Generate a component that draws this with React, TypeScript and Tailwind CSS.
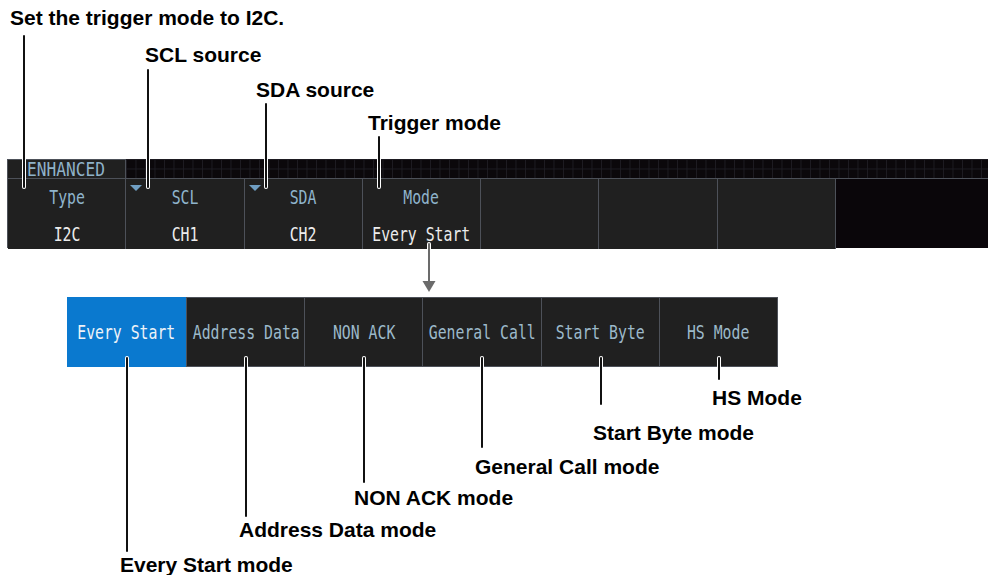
const mono = "font-['DejaVu_Sans_Mono','Liberation_Mono',monospace]";

const cells = [
  { label: "Type", value: "I2C", mark: false },
  { label: "SCL", value: "CH1", mark: true },
  { label: "SDA", value: "CH2", mark: true },
  { label: "Mode", value: "Every Start", mark: false },
  { label: "", value: "", mark: false },
  { label: "", value: "", mark: false },
  { label: "", value: "", mark: false },
];

const modes = ["Every Start", "Address Data", "NON ACK", "General Call", "Start Byte", "HS Mode"];

const notes = [
  { text: "Set the trigger mode to I2C.", x: 10, y: 6, lx: 23, top: 35, bottom: 188 },
  { text: "SCL source", x: 145, y: 43, lx: 147, top: 69, bottom: 188 },
  { text: "SDA source", x: 256, y: 78, lx: 265, top: 103, bottom: 188 },
  { text: "Trigger mode", x: 368, y: 111, lx: 378, top: 136, bottom: 188 },
  { text: "HS Mode", x: 712, y: 386, lx: 718, top: 357, bottom: 380 },
  { text: "Start Byte mode", x: 593, y: 421, lx: 600, top: 357, bottom: 405 },
  { text: "General Call mode", x: 475, y: 455, lx: 481, top: 357, bottom: 448 },
  { text: "NON ACK mode", x: 354, y: 486, lx: 363, top: 357, bottom: 483 },
  { text: "Address Data mode", x: 239, y: 518, lx: 245, top: 357, bottom: 517 },
  { text: "Every Start mode", x: 120, y: 553, lx: 126, top: 357, bottom: 552 },
];

function Squeezed({ children, className }: { children: string; className?: string }) {
  return (
    <span className={`inline-block scale-x-[0.74] whitespace-pre text-[20px] leading-none ${mono} ${className ?? ""}`}>
      {children}
    </span>
  );
}

function Callout({ text, x, y, lx, top, bottom }: (typeof notes)[number]) {
  return (
    <>
      <div
        className="absolute w-[1.5px] rounded-full bg-[#111] shadow-[0_0_0_1px_#fff]"
        style={{ left: lx, top, height: bottom - top }}
      />
      <div
        className="absolute whitespace-nowrap font-['Liberation_Sans',Arial,sans-serif] text-[21px] font-bold leading-6 text-black"
        style={{ left: x, top: y }}
      >
        {text}
      </div>
    </>
  );
}

export default function App() {
  return (
    <div className="relative h-[575px] w-[988px] overflow-hidden bg-white">
      {/* trigger setup panel */}
      <div className="pl-[7px] pt-[159px]">
        <div className="flex h-[19px]">
          <div className="flex w-[119px] shrink-0 items-center border-x border-t border-[#4d5159] bg-[#202020] pl-[19px]">
            <span className={`inline-block origin-left scale-x-[0.81] whitespace-nowrap text-[20px] leading-none text-[#8fb2c9] ${mono}`}>
              ENHANCED
            </span>
          </div>
          <div className="flex-1 bg-[#0b080b] bg-[linear-gradient(to_right,#1d1c22_1px,transparent_1px),linear-gradient(to_bottom,#1d1c22_1px,transparent_1px)] bg-[size:9.5px_9.5px]" />
        </div>
        <div className="flex h-[70px] border-t border-[#4d5159]">
          <div className="grid w-[829px] grid-cols-7 border-b border-l border-[#4d5159]">
            {cells.map((c, i) => (
              <div key={i} className="relative flex min-w-0 flex-col border-r border-[#4d5159] bg-[#202020]">
                {c.mark && (
                  <div className="absolute left-[4px] top-[6px] h-0 w-0 border-x-[6px] border-t-[6px] border-x-transparent border-t-[#6f9ec2]" />
                )}
                <div className="flex h-[36px] items-center justify-center">
                  <Squeezed className="text-[#8fb4cc]">{c.label}</Squeezed>
                </div>
                <div className="flex h-[34px] items-center justify-center pt-[4px]">
                  <Squeezed className="text-[#ececec]">{c.value}</Squeezed>
                </div>
              </div>
            ))}
          </div>
          <div className="flex-1 bg-[#0a060a]" />
        </div>
      </div>

      {/* mode menu */}
      <div className="ml-[67px] mt-[49px] grid h-[70px] w-[711px] grid-cols-6 border border-[#4d5159] bg-[#202020]">
        {modes.map((m, i) => (
          <div
            key={m}
            className={`flex min-w-0 items-center justify-center ${
              i === 0 ? "-my-px -ml-px bg-[#0a79cf]" : "border-l border-[#4d5159]"
            }`}
          >
            <Squeezed className={i === 0 ? "text-[#eef3f8]" : "text-[#9cb9ca]"}>{m}</Squeezed>
          </div>
        ))}
      </div>

      {/* arrow from Mode to menu */}
      <svg className="absolute left-[420px] top-[242px]" width="18" height="52" viewBox="0 0 18 52">
        <line x1="9" y1="2" x2="9" y2="40" stroke="#fff" strokeWidth="4" strokeLinecap="round" />
        <line x1="9" y1="2" x2="9" y2="41" stroke="#6b6b6b" strokeWidth="2" strokeLinecap="round" />
        <polygon points="2.5,39 15.5,39 9,50" fill="#6b6b6b" />
      </svg>

      {notes.map((n) => (
        <Callout key={n.text} {...n} />
      ))}
    </div>
  );
}
